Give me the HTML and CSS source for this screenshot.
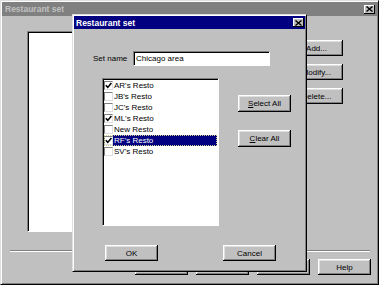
FILE: index.html
```html
<!DOCTYPE html>
<html lang="en">
<head>
    <meta charset="utf-8">
    <title>Restaurant set</title>
    <link rel="stylesheet" href="styles.css">
</head>
<body>
    <div class="win">
        <div class="titlebar inactive">
            <span class="title-text">Restaurant set</span>
            <span class="close-btn">
                <svg width="7" height="6" viewBox="0 0 7 6"><path d="M0.5 0.5 L6.5 5.5 M6.5 0.5 L0.5 5.5" stroke="#000" stroke-width="1.4"/></svg>
            </span>
        </div>

        <div class="win-body">
            <div class="main-row">
                <div class="sets-list"></div>
                <div class="side-btns">
                    <button class="btn">Add...</button>
                    <button class="btn">Modify...</button>
                    <button class="btn">Delete...</button>
                </div>
            </div>
            <div class="groove"></div>
            <div class="foot-btns">
                <button class="btn">OK</button>
                <button class="btn">Cancel</button>
                <button class="btn">Apply</button>
                <button class="btn">Help</button>
            </div>
        </div>

        <!-- modal dialog on top of the main window -->
        <div class="dialog">
            <div class="titlebar active">
                <span class="title-text">Restaurant set</span>
                <span class="close-btn">
                    <svg width="7" height="6" viewBox="0 0 7 6"><path d="M0.5 0.5 L6.5 5.5 M6.5 0.5 L0.5 5.5" stroke="#000" stroke-width="1.4"/></svg>
                </span>
            </div>

            <div class="dlg-body">
                <div class="name-row">
                    <label class="name-label">Set name</label>
                    <div class="text-input">Chicago area</div>
                </div>

                <div class="list-row">
                    <ul class="check-list">
                        <li class="check-item"><span class="checkbox"><svg width="7" height="7" viewBox="0 0 7 7"><path d="M0.8 3.2 L2.8 5.4 L6.4 1" fill="none" stroke="#000" stroke-width="1.6"/></svg></span><span class="item-text">AR's Resto</span></li>
                        <li class="check-item"><span class="checkbox"></span><span class="item-text">JB's Resto</span></li>
                        <li class="check-item"><span class="checkbox"></span><span class="item-text">JC's Resto</span></li>
                        <li class="check-item"><span class="checkbox"><svg width="7" height="7" viewBox="0 0 7 7"><path d="M0.8 3.2 L2.8 5.4 L6.4 1" fill="none" stroke="#000" stroke-width="1.6"/></svg></span><span class="item-text">ML's Resto</span></li>
                        <li class="check-item"><span class="checkbox"></span><span class="item-text">New Resto</span></li>
                        <li class="check-item selected"><span class="checkbox"><svg width="7" height="7" viewBox="0 0 7 7"><path d="M0.8 3.2 L2.8 5.4 L6.4 1" fill="none" stroke="#000" stroke-width="1.6"/></svg></span><span class="item-text">RF's Resto</span></li>
                        <li class="check-item"><span class="checkbox"></span><span class="item-text">SV's Resto</span></li>
                    </ul>
                    <div class="list-btns">
                        <button class="btn"><u>S</u>elect All</button>
                        <button class="btn"><u>C</u>lear All</button>
                    </div>
                </div>

                <div class="dlg-foot">
                    <button class="btn">OK</button>
                    <button class="btn">Cancel</button>
                </div>
            </div>
        </div>
    </div>
</body>
</html>
```

FILE: styles.css
```css
* {
    box-sizing: border-box;
}

body {
    margin: 0;
    font-family: "Liberation Sans", Arial, sans-serif;
    font-size: 8px;
    color: #000;
    background: #c0c0c0;
}

.win {
    position: relative;
    width: 379px;
    height: 285px;
    background: #c0c0c0;
    border: 1px solid;
    border-color: #dfdfdf #000 #000 #dfdfdf;
    box-shadow: inset 1px 1px #fff, inset -1px -1px #808080;
    padding: 1px;
    overflow: hidden;
}

.titlebar {
    display: flex;
    align-items: center;
    justify-content: space-between;
    height: 14px;
    padding: 0 2px 0 3px;
    font-weight: bold;
    font-size: 8.5px;
}

.titlebar.inactive {
    background: #808080;
    color: #c0c0c0;
}

.titlebar.active {
    height: 13px;
    background: #000080;
    color: #fff;
    padding-left: 2px;
    padding-right: 1px;
}

.close-btn {
    display: flex;
    align-items: center;
    justify-content: center;
    width: 11px;
    height: 9px;
    background: #c0c0c0;
    box-shadow: inset -1px -1px #000, inset 1px 1px #fff;
}

.btn {
    display: flex;
    align-items: center;
    justify-content: center;
    width: 53px;
    height: 16px;
    padding: 0;
    border: none;
    background: #c0c0c0;
    font: inherit;
    color: #000;
    box-shadow: inset -1px -1px #000, inset 1px 1px #fff, inset -2px -2px #808080, inset 2px 2px #dfdfdf;
}

/* main window behind the dialog */
.win-body {
    padding: 15px 0 0 0;
}

.main-row {
    display: flex;
    gap: 33px;
    margin-left: 25px;
}

.sets-list {
    width: 230px;
    height: 201px;
    background: #fff;
    border: 1px solid;
    border-color: #808080 #fff #fff #808080;
    box-shadow: inset 1px 1px #000;
}

.side-btns {
    display: flex;
    flex-direction: column;
    gap: 8px;
    padding-top: 9px;
}

.groove {
    margin: 18px 7px 0 8px;
    border-top: 1px solid #808080;
    border-bottom: 1px solid #fff;
}

.foot-btns {
    display: flex;
    justify-content: flex-end;
    gap: 8px;
    margin: 7px 6px 0 0;
}

/* dialog */
.dialog {
    position: absolute;
    left: 71px;
    top: 13px;
    width: 235px;
    height: 258px;
    background: #c0c0c0;
    border: 1px solid;
    border-color: #dfdfdf #000 #000 #dfdfdf;
    box-shadow: inset 1px 1px #fff, inset -1px -1px #808080;
    padding: 1px;
}

.dlg-body {
    padding-top: 22px;
}

.name-row {
    display: flex;
    align-items: center;
    margin-left: 19px;
}

.name-label {
    width: 40px;
}

.text-input {
    width: 137px;
    height: 15px;
    padding: 2px 0 0 2px;
    background: #fff;
    border: 1px solid;
    border-color: #808080 #fff #fff #808080;
    box-shadow: inset 1px 1px #000;
}

.list-row {
    display: flex;
    gap: 19px;
    margin: 12px 0 0 28px;
}

.check-list {
    list-style: none;
    margin: 0;
    width: 117px;
    height: 148px;
    background: #fff;
    border: 1px solid;
    border-color: #808080 #fff #fff #808080;
    box-shadow: inset 1px 1px #000;
    padding: 1px 1px 0 1px;
}

.check-item {
    display: flex;
    align-items: center;
    height: 11px;
}

.checkbox {
    display: flex;
    align-items: center;
    justify-content: center;
    width: 9px;
    height: 9px;
    flex: none;
    background: #fff;
    border: 1px solid;
    border-color: #808080 #dfdfdf #dfdfdf #808080;
}

.item-text {
    flex: 1;
    height: 11px;
    line-height: 11px;
    padding-left: 1px;
}

.check-item.selected {
    outline: 1px dotted #d0d090;
    outline-offset: -1px;
}

.check-item.selected .item-text {
    background: #000080;
    color: #fff;
}

.list-btns {
    display: flex;
    flex-direction: column;
    gap: 18px;
    padding-top: 17px;
}

.list-btns .btn {
    height: 17px;
}

.dlg-foot {
    display: flex;
    gap: 65px;
    margin: 19px 0 0 31px;
}
```
